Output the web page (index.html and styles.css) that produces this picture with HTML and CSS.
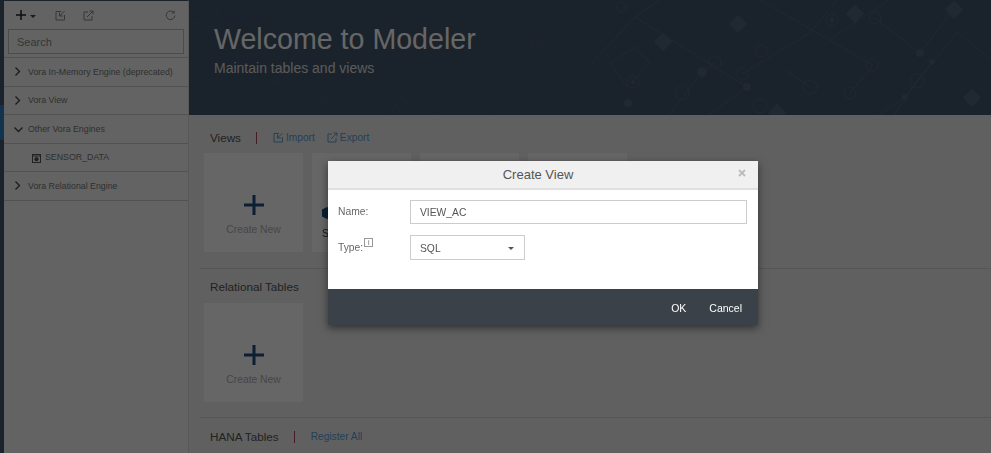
FILE: index.html
```html
<!DOCTYPE html>
<html lang="en">
<head>
  <meta charset="UTF-8" />
  <title>Modeler</title>
  <link rel="stylesheet" href="styles.css">
</head>
<body>
  <div class="strip"><div class="strip-active"></div></div>

  <aside class="sidebar">
    <div class="toolbar">
      <svg class="tool-plus" width="12" height="12" viewBox="0 0 12 12"><path d="M6 1v10M1 6h10" /></svg>
      <span class="caret caret-small"></span>
      <svg class="tool tool-import" width="11" height="11" viewBox="0 0 11 11"><path d="M6 1.500H1v8.500h8.500V5M4.500 2.500v3.500H8M4.500 6L9.500 1" /></svg>
      <svg class="tool tool-export" width="11" height="11" viewBox="0 0 11 11"><path d="M5 2H1v8h8V6M4 7l6-6M6.500 1H10v3.500" /></svg>
      <svg class="tool tool-refresh" width="11" height="11" viewBox="0 0 11 11"><path d="M8.800 2.500a4.300 4.300 0 1 0 1 3M9.200 0.500v2.500H6.700" /></svg>
    </div>
    <input class="search" type="text" placeholder="Search" />
    <ul class="tree">
      <li class="tree-row"><svg class="chev" width="7" height="9" viewBox="0 0 7 9"><path d="M1.500 .5l4 4-4 4" /></svg>Vora In-Memory Engine (deprecated)</li>
      <li class="tree-row"><svg class="chev" width="7" height="9" viewBox="0 0 7 9"><path d="M1.500 .5l4 4-4 4" /></svg>Vora View</li>
      <li class="tree-row"><svg class="chev chev-open" width="9" height="7" viewBox="0 0 9 7"><path d="M.5 1.500l4 4 4-4" /></svg>Other Vora Engines</li>
      <li class="tree-row tree-child">
        <svg class="table-icon" width="9" height="9" viewBox="0 0 9 9"><rect x=".5" y=".5" width="8" height="8" /><path d="M.5 2h8" /><circle cx="4.500" cy="5.200" r="1.700" /></svg>
        SENSOR_DATA
      </li>
      <li class="tree-row"><svg class="chev" width="7" height="9" viewBox="0 0 7 9"><path d="M1.500 .5l4 4-4 4" /></svg>Vora Relational Engine</li>
    </ul>
  </aside>

  <main class="main">
    <header class="banner">
      <svg class="banner-art" width="802" height="115" viewBox="0 0 802 115">
        <g class="art-faint">
          <path d="M20 60L50 15M87 80L134 20M200 115L260 30M250 50L300 93M277 83L250 115M348 42L420 100M344 43L300 115M120 0L190 50" />
          <circle cx="7" cy="18" r="6" />
          <circle cx="33" cy="13" r="6" />
          <circle cx="107" cy="95" r="6" />
          <circle cx="213" cy="105" r="6" />
          <circle cx="87" cy="80" r="3" />
          <circle cx="20" cy="95" r="3" />
          <circle cx="134" cy="98" r="3" />
          <circle cx="348" cy="42" r="5" />
        </g>
        <g class="art-lines">
          <path d="M401 65L446 17L558 87L520 115M446 17L470 0M421 63L446 47L461 63L438 87ZM571 0L684 65L661 93M621 33L553 74M648 0L621 33M596 70L621 87M686 18L731 53L764 10M768 32L802 60M768 32L716 97L690 115M743 62L728 81L705 115M526 62L513 72L480 115M640 40L700 0" />
          <circle cx="643" cy="20" r="6" />
          <circle cx="686" cy="18" r="6" />
          <circle cx="728" cy="81" r="7" />
          <circle cx="661" cy="93" r="6" />
          <circle cx="621" cy="87" r="7" />
          <circle cx="571" cy="106" r="7" />
          <circle cx="493" cy="93" r="7" />
          <circle cx="444" cy="82" r="6" />
          <circle cx="553" cy="74" r="6" />
          <circle cx="572" cy="51" r="6" />
          <circle cx="683" cy="65" r="6" />
          <circle cx="526" cy="62" r="6" />
          <circle cx="432" cy="7" r="5" />
        </g>
        <g class="art-solid">
          <rect x="660" y="7" width="13" height="13" transform="rotate(45 666 13)" />
          <rect x="759" y="3" width="13" height="13" transform="rotate(45 765 9)" />
          <rect x="468" y="35" width="13" height="13" transform="rotate(45 474 41)" />
          <rect x="543" y="17" width="13" height="13" transform="rotate(45 549 23)" />
          <rect x="777" y="91" width="13" height="13" transform="rotate(45 783 97)" />
          <rect x="582" y="106" width="13" height="13" transform="rotate(45 588 112)" />
          <circle cx="731" cy="53" r="4" />
          <circle cx="743" cy="62" r="3" />
          <circle cx="716" cy="97" r="3" />
          <circle cx="513" cy="72" r="5" />
          <circle cx="558" cy="87" r="4" />
          <circle cx="439" cy="103" r="4" />
          <circle cx="643" cy="20" r="2" />
          <circle cx="444" cy="82" r="2" />
        </g>
      </svg>
      <h1 class="banner-title">Welcome to Modeler</h1>
      <p class="banner-sub">Maintain tables and views</p>
    </header>

    <section class="section section-views">
      <div class="section-head">
        <h2 class="section-title">Views</h2>
        <span class="sep"></span>
        <a class="link"><svg width="11" height="11" viewBox="0 0 11 11"><path d="M6 1.500H1v8.500h8.500V5M4.500 2.500v3.500H8M4.500 6L9.500 1" /></svg>Import</a>
        <a class="link"><svg width="11" height="11" viewBox="0 0 11 11"><path d="M5 2H1v8h8V6M4 7l6-6M6.500 1H10v3.500" /></svg>Export</a>
      </div>
      <div class="tiles">
        <div class="tile tile-new">
          <svg width="22" height="22" viewBox="0 0 22 22"><path d="M11 1v20M1 11h20" /></svg>
          <span>Create New</span>
        </div>
        <div class="tile tile-item">
          <svg width="10" height="12" viewBox="0 0 10 12"><path d="M5 0l5 2.500v7L5 12 0 9.500v-7z" /></svg>
          <span>SENSOR_VIEW</span>
        </div>
        <div class="tile"></div>
        <div class="tile"></div>
      </div>
    </section>

    <section class="section section-rel">
      <div class="section-head">
        <h2 class="section-title">Relational Tables</h2>
      </div>
      <div class="tiles">
        <div class="tile tile-new">
          <svg width="22" height="22" viewBox="0 0 22 22"><path d="M11 1v20M1 11h20" /></svg>
          <span>Create New</span>
        </div>
      </div>
    </section>

    <section class="section section-hana">
      <div class="section-head">
        <h2 class="section-title">HANA Tables</h2>
        <span class="sep sep-hana"></span>
        <a class="link">Register All</a>
      </div>
    </section>
  </main>

  <div class="overlay"></div>

  <div class="dialog">
    <div class="dialog-head">
      Create View
      <svg class="dialog-close" width="8" height="8" viewBox="0 0 8 8"><path d="M1 1l6 6M7 1L1 7" /></svg>
    </div>
    <div class="dialog-body">
      <div class="form-row">
        <label class="form-label">Name:</label>
        <input class="form-input" type="text" value="VIEW_AC" />
      </div>
      <div class="form-row">
        <label class="form-label">Type:<span class="info">i</span></label>
        <div class="select">SQL<span class="caret"></span></div>
      </div>
    </div>
    <div class="dialog-foot">
      <button class="dialog-btn">OK</button>
      <button class="dialog-btn">Cancel</button>
    </div>
  </div>
</body>
</html>
```

FILE: styles.css
```css
* {
  box-sizing: border-box;
}
html, body {
  height: 100%;
}
body {
  margin: 0;
  display: flex;
  overflow: hidden;
  font-family: "Liberation Sans", Arial, sans-serif;
  background-color: #f0f0f0;
  color: #444;
}

.strip {
  width: 4px;
  flex: none;
  background-color: #43556b;
  padding-top: 105px;
}
.strip-active {
  height: 35px;
  background-color: #2f7fc0;
}

.sidebar {
  width: 185px;
  flex: none;
  background-color: #f7f7f7;
  border-right: 1px solid #dcdcdc;
  border-top: 1px solid #43556b;
}
.toolbar {
  height: 26px;
  display: flex;
  align-items: center;
  padding-left: 11px;
  padding-top: 2px;
}
.tool-plus path {
  stroke: #222;
  stroke-width: 1.500;
  fill: none;
}
.caret {
  width: 0;
  height: 0;
  border-left: 3px solid transparent;
  border-right: 3px solid transparent;
  border-top: 3px solid #444;
}
.caret-small {
  margin-left: 3px;
  margin-top: 2px;
}
.tool {
  fill: none;
  stroke: #888;
  stroke-width: 1;
}
.tool-import {
  margin-left: 19px;
}
.tool-export {
  margin-left: 17px;
}
.tool-refresh {
  margin-left: auto;
  margin-right: 12px;
}
.search {
  display: block;
  width: 176px;
  height: 25px;
  margin: 2px 0 0 4px;
  padding: 0 8px;
  border: 1px solid #bbb;
  background-color: #f7f7f7;
  font: 11px "Liberation Sans", Arial, sans-serif;
}
.search::placeholder {
  color: #888;
}
.tree {
  list-style: none;
  margin: 3px 0 0;
  padding: 0;
  border-top: 1px solid #ccc;
}
.tree-row {
  position: relative;
  height: 28.500px;
  display: flex;
  align-items: center;
  padding-left: 24px;
  border-bottom: 1px solid #ccc;
  font-size: 8.800px;
  color: #777;
}
.chev {
  position: absolute;
  left: 10px;
  top: 9px;
  fill: none;
  stroke: #444;
  stroke-width: 1.300;
}
.chev-open {
  left: 10px;
  top: 11px;
}
.tree-child {
  padding-left: 41px;
}
.table-icon {
  position: absolute;
  left: 28px;
  top: 10px;
  fill: none;
  stroke: #555;
}
.table-icon circle {
  fill: #555;
}

.main {
  flex: 1;
  min-width: 0;
}
.banner {
  position: relative;
  height: 115px;
  padding: 21px 25px 0;
  background-color: #43556b;
  color: #fff;
  overflow: hidden;
}
.banner-art {
  position: absolute;
  left: 0;
  top: 0;
}
.art-faint {
  fill: none;
  stroke: #4a5c73;
}
.art-lines {
  fill: none;
  stroke: #516379;
}
.art-solid {
  fill: #52647a;
}
.banner-title {
  position: relative;
  margin: 0;
  font-size: 28.600px;
  font-weight: normal;
  line-height: 36px;
}
.banner-sub {
  position: relative;
  margin: 3px 0 0;
  font-size: 14px;
  line-height: 16px;
  color: #e0e0e0;
}

.section {
  margin-left: 11px;
  padding-left: 4px;
  border-bottom: 1px solid #d8d8d8;
}
.section-views {
  height: 154px;
}
.section-rel {
  height: 149px;
}
.section-hana {
  border-bottom: none;
}
.section-head {
  display: flex;
  align-items: center;
  height: 38px;
  padding-top: 7px;
}
.section-rel .section-head {
  height: 34px;
}
.section-rel .section-head {
  padding-top: 0;
}
.section-hana .section-head {
  height: 35px;
  padding-top: 2px;
}
.section-title {
  margin: 0 0 0 6px;
  font-size: 11.700px;
  font-weight: normal;
  color: #555;
}
.sep {
  width: 1px;
  height: 12px;
  margin: 0 16px 0 15px;
  background-color: #b04a5c;
}
.sep-hana {
  margin: 0 16px 0 15px;
}
.link {
  display: flex;
  align-items: center;
  gap: 2px;
  margin-right: 12px;
  font-size: 10.200px;
  color: #5aa0d4;
}
.link svg {
  fill: none;
  stroke: #5aa0d4;
}
.tiles {
  display: flex;
  gap: 9px;
}
.tile {
  width: 99px;
  height: 99px;
  flex: none;
  background-color: #fff;
}
.tile-new {
  display: flex;
  flex-direction: column;
  align-items: center;
  padding-top: 41px;
  font-size: 10.300px;
  color: #b0b0b0;
}
.tile-new span {
  margin-top: 8px;
}
.tile-new svg {
  fill: none;
  stroke: #1f4f80;
  stroke-width: 3;
}
.tile-item {
  padding: 54px 0 0 10px;
  font-size: 10.500px;
  color: #444;
}
.tile-item svg {
  display: block;
  margin-bottom: 8px;
  fill: #1f4f80;
}

.overlay {
  position: fixed;
  inset: 0;
  background-color: rgba(0, 0, 0, 0.6);
}

.dialog {
  position: absolute;
  left: 328px;
  top: 161px;
  width: 430px;
  height: 164px;
  display: flex;
  flex-direction: column;
  background-color: #fff;
  box-shadow: 0 3px 8px rgba(0, 0, 0, 0.5);
}
.dialog-head {
  position: relative;
  height: 29px;
  flex: none;
  padding-right: 10px;
  background-color: #f0f0f0;
  border-bottom: 2px solid #e0e0e0;
  text-align: center;
  font-size: 13px;
  line-height: 28px;
  color: #555;
}
.dialog-close {
  position: absolute;
  right: 12px;
  top: 8px;
  fill: none;
  stroke: #bbb;
  stroke-width: 1.800;
}
.dialog-body {
  flex: 1;
  padding: 10px 11px 0 10px;
}
.form-row {
  display: flex;
  align-items: center;
  margin-bottom: 11px;
}
.form-label {
  width: 72px;
  flex: none;
  font-size: 10.300px;
  line-height: 12px;
  color: #666;
}
.info {
  position: relative;
  top: -6px;
  display: inline-block;
  width: 9px;
  height: 9px;
  margin-left: 1px;
  border: 1px solid #999;
  font-size: 7px;
  line-height: 7px;
  text-align: center;
}
.form-input,
.select {
  padding: 0 9px;
  border: 1px solid #ccc;
  background-color: #fff;
  font: 10.300px "Liberation Sans", Arial, sans-serif;
  color: #555;
}
.form-input {
  flex: 1;
  min-width: 0;
  height: 24px;
}
.select {
  width: 115px;
  height: 25px;
  padding-top: 1px;
  display: flex;
  align-items: center;
  justify-content: space-between;
}
.select .caret {
  border-top-color: #555;
  margin-right: 1px;
}
.dialog-foot {
  height: 36px;
  flex: none;
  display: flex;
  justify-content: flex-end;
  align-items: center;
  gap: 23px;
  padding: 2px 16px 0 0;
  background-color: #3a4148;
}
.dialog-btn {
  padding: 0;
  border: none;
  background: none;
  font: 10.500px "Liberation Sans", Arial, sans-serif;
  color: #fff;
}
```
